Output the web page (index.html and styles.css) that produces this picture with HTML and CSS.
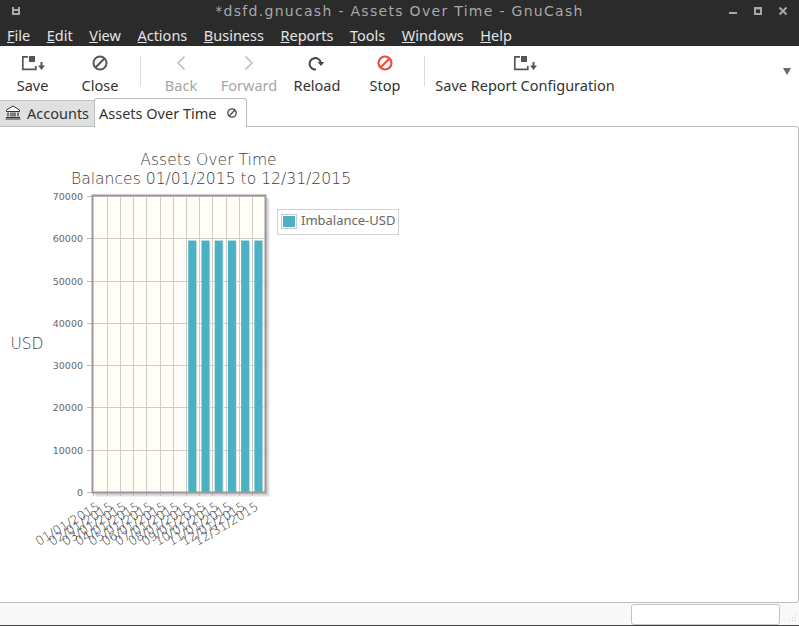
FILE: index.html
```html
<!DOCTYPE html>
<html lang="en">
<head>
  <meta charset="UTF-8">
  <title>Assets Over Time - GnuCash</title>
  <link rel="stylesheet" href="styles.css">
</head>
<body>

<div class="window">
  <div class="titlebar">
    <div class="title-left">
      <svg width="10" height="10" viewBox="0 0 10 10"><path d="M1 1h2v2h4V1h2v8H1z M3 5v2h4V5z" fill="#a8a8a8" fill-rule="evenodd"/></svg>
    </div>
    <div class="title">*dsfd.gnucash - Assets Over Time - GnuCash</div>
    <div class="win-buttons">
      <svg width="10" height="10" viewBox="0 0 10 10"><rect x="1" y="6" width="8" height="2" fill="#a8a8a8"/></svg>
      <svg width="10" height="10" viewBox="0 0 10 10"><path d="M1 1h8v8H1z M3 3.500v3.500h4V3.500z" fill="#a8a8a8" fill-rule="evenodd"/></svg>
      <svg width="10" height="10" viewBox="0 0 10 10"><path d="M1.500 1.500l7 7M8.500 1.500l-7 7" stroke="#a8a8a8" stroke-width="2"/></svg>
    </div>
  </div>

  <div class="menubar">
    <span><u>F</u>ile</span>
    <span><u>E</u>dit</span>
    <span><u>V</u>iew</span>
    <span><u>A</u>ctions</span>
    <span><u>B</u>usiness</span>
    <span><u>R</u>eports</span>
    <span><u>T</u>ools</span>
    <span><u>W</u>indows</span>
    <span><u>H</u>elp</span>
  </div>

  <div class="toolbar">
    <div class="tool tool-first">
      <svg width="24" height="18" viewBox="0 0 24 18"><path d="M7 2.800H1.800v12.500h13V12" fill="none" stroke="#555" stroke-width="1.700"/><rect x="8" y="2" width="6" height="6" fill="#555"/><path d="M19.500 8h2v3.500H24L20.500 16 17 11.500h2.500z" fill="#555"/></svg>
      <span>Save</span>
    </div>
    <div class="tool">
      <svg width="18" height="18" viewBox="0 0 18 18"><circle cx="9" cy="9" r="6.500" fill="none" stroke="#555" stroke-width="2"/><path d="M4.500 13.500l9-9" stroke="#555" stroke-width="2"/></svg>
      <span>Close</span>
    </div>
    <div class="separator"></div>
    <div class="tool disabled">
      <svg width="18" height="18" viewBox="0 0 18 18"><path d="M12.500 2.500L6 9l6.500 6.500" fill="none" stroke="#c8c8c8" stroke-width="1.800"/></svg>
      <span>Back</span>
    </div>
    <div class="tool disabled">
      <svg width="18" height="18" viewBox="0 0 18 18"><path d="M5.500 2.500L12 9l-6.500 6.500" fill="none" stroke="#c8c8c8" stroke-width="1.800"/></svg>
      <span>Forward</span>
    </div>
    <div class="tool">
      <svg width="18" height="18" viewBox="0 0 18 18"><path d="M8 15.400A5.700 5.700 0 1 1 12.800 8.500" fill="none" stroke="#444" stroke-width="2"/><path d="M9.800 8h6.400l-3.200 4z" fill="#444"/></svg>
      <span>Reload</span>
    </div>
    <div class="tool">
      <svg width="18" height="18" viewBox="0 0 18 18"><circle cx="9" cy="9" r="6.500" fill="none" stroke="#ef4a3c" stroke-width="2.200"/><path d="M4.500 13.500l9-9" stroke="#ef4a3c" stroke-width="2.200"/></svg>
      <span>Stop</span>
    </div>
    <div class="separator separator-last"></div>
    <div class="tool tool-wide">
      <svg width="24" height="18" viewBox="0 0 24 18"><path d="M7 2.800H1.800v12.500h13V12" fill="none" stroke="#555" stroke-width="1.700"/><rect x="8" y="2" width="6" height="6" fill="#555"/><path d="M19.500 8h2v3.500H24L20.500 16 17 11.500h2.500z" fill="#555"/></svg>
      <span>Save Report Configuration</span>
    </div>
    <div class="overflow"></div>
  </div>

  <div class="tabs">
    <div class="tab tab-back">
      <svg width="16" height="15" viewBox="0 0 16 15"><path d="M8 1L1.500 5v1.500h13V5z" fill="#fff" stroke="#333"/><path d="M3 7.500v4M6 7.500v4M8 7.500v4M10 7.500v4M13 7.500v4" stroke="#333" stroke-width="1.200"/><path d="M1 12.500h14M.5 14h15" stroke="#333"/></svg>
      <span>Accounts</span>
    </div>
    <div class="tab tab-active">
      <span>Assets Over Time</span>
      <svg width="12" height="12" viewBox="0 0 12 12"><circle cx="6" cy="6" r="4.200" fill="none" stroke="#444" stroke-width="1.300"/><path d="M3 9l6-6" stroke="#444" stroke-width="1.300"/></svg>
    </div>
  </div>

  <div class="report">
    <svg class="chart" width="420" height="475" viewBox="0 127 420 475">
      <text class="chart-title" x="208.500" y="165">Assets Over Time</text>
      <text class="chart-title" x="211" y="184">Balances 01/01/2015 to 12/31/2015</text>
      <text class="axis-name" x="27" y="349">USD</text>
      <g id="plot"></g>
      <rect x="277.500" y="209.500" width="121" height="25" fill="#fff" stroke="#d0d0d0"/>
      <rect x="281.500" y="214.500" width="15" height="14" fill="#fff" stroke="#ccc"/>
      <rect x="283" y="216" width="12" height="11" fill="#4bb2c5"/>
      <text class="legend-text" x="301" y="225">Imbalance-USD</text>
    </svg>
  </div>

  <div class="statusbar">
    <div class="status-box"></div>
    <svg class="grip" width="12" height="12" viewBox="0 0 12 12" fill="#ccc"><rect x="9" y="1" width="1" height="1"/><rect x="6" y="4" width="1" height="1"/><rect x="9" y="4" width="1" height="1"/><rect x="3" y="7" width="1" height="1"/><rect x="6" y="7" width="1" height="1"/><rect x="9" y="7" width="1" height="1"/></svg>
  </div>
</div>

<script src="chart.js"></script>
</body>
</html>
```

FILE: styles.css
```css
* {
  box-sizing: border-box;
}

html, body {
  margin: 0;
  height: 100%;
}

body {
  font-family: 'Noto Sans', sans-serif;
  background: #fff;
  overflow: hidden;
}

.window {
  width: 799px;
  height: 626px;
  display: flex;
  flex-direction: column;
}

.titlebar {
  height: 23px;
  background: #2b2b2b;
  color: #a8a8a8;
  display: grid;
  grid-template-columns: 1fr auto 1fr;
  align-items: center;
  padding: 0 11px 1px;
}

.title-left svg,
.win-buttons svg {
  display: block;
}

.title {
  font-family: 'DejaVu Sans', sans-serif;
  font-size: 14px;
  letter-spacing: 1.300px;
}

.win-buttons {
  display: flex;
  justify-content: flex-end;
  gap: 15px;
}

.menubar {
  height: 23px;
  background: #2b2b2b;
  color: #e4e4e4;
  font-size: 14.500px;
  display: flex;
  align-items: center;
  gap: 16.500px;
  padding: 0 7px;
}

.toolbar {
  height: 52px;
  background: #fff;
  display: flex;
  position: relative;
  color: #333;
  font-size: 14.500px;
}

.tool {
  width: 68px;
  display: flex;
  flex-direction: column;
  align-items: center;
  padding-top: 8px;
  gap: 3px;
}

.tool svg {
  display: block;
}

.tool-first {
  width: 65px;
  margin-right: 1px;
}

.tool-wide {
  width: 188px;
}

.disabled {
  color: #a6a6a6;
}

.separator {
  width: 1px;
  height: 30px;
  background: #dcdcdc;
  margin: 10px 6px 0;
}

.separator-last {
  margin-left: 5px;
}

.overflow {
  position: absolute;
  right: 8px;
  top: 22px;
  width: 0;
  height: 0;
  border-left: 4px solid transparent;
  border-right: 4px solid transparent;
  border-top: 7px solid #666;
}

.tabs {
  height: 29px;
  display: flex;
  align-items: flex-end;
  font-size: 14.500px;
  color: #333;
  margin-bottom: -1px;
  position: relative;
  z-index: 1;
}

.tab {
  display: flex;
  align-items: center;
}

.tab-back {
  height: 27px;
  width: 94px;
  background: #e0e0e0;
  border-top: 1px solid #c4c4c4;
  border-bottom: 1px solid #bdbdbd;
  padding: 0 0 2px 5px;
  gap: 6px;
}

.tab-active {
  height: 29px;
  width: 153px;
  background: #fff;
  border: 1px solid #bdbdbd;
  border-bottom: none;
  border-radius: 3px 3px 0 0;
  padding: 0 0 1px 4px;
  gap: 10px;
}

.report {
  height: 477px;
  border: 1px solid #bdbdbd;
  border-left: none;
  border-radius: 0 3px 3px 0;
  background: #fff;
}

.chart {
  display: block;
}

.chart-title {
  font-family: 'DejaVu Sans', sans-serif;
  font-weight: 200;
  font-size: 15.600px;
  fill: #3c3c3c;
  text-anchor: middle;
}

.axis-name {
  font-family: 'DejaVu Sans', sans-serif;
  font-weight: 200;
  font-size: 15.500px;
  fill: #3c3c3c;
  text-anchor: middle;
}

.tick-y {
  font-family: 'DejaVu Sans', sans-serif;
  font-size: 9.500px;
  fill: #666;
  text-anchor: end;
}

.tick-x {
  font-family: 'DejaVu Sans', sans-serif;
  font-weight: 200;
  font-size: 12.500px;
  fill: #3c3c3c;
  text-anchor: end;
}

.legend-text {
  font-family: 'Noto Sans', sans-serif;
  font-size: 13px;
  fill: #666;
}

.statusbar {
  flex: 1;
  background: #f8f8f8;
  border-bottom: 1px solid #444;
  display: flex;
  justify-content: flex-end;
  align-items: flex-end;
}

.status-box {
  width: 149px;
  height: 21px;
  background: #fff;
  border: 1px solid #c4c4c4;
  border-radius: 3px;
  margin-right: 6px;
  align-self: center;
}

.grip {
  margin-right: 1px;
}
```

FILE: chart.js
```js
// draws the jqplot style chart into the #plot group
var NS = 'http://www.w3.org/2000/svg';
var plot = document.getElementById('plot');

var left = 93, right = 265, top0 = 196, bottom = 492;
var labels = ['01/01/2015', '02/01/2015', '03/01/2015', '04/01/2015', '05/01/2015', '06/01/2015', '07/01/2015',
  '08/01/2015', '09/01/2015', '10/01/2015', '11/01/2015', '12/01/2015', '12/31/2015'];
var values = [0, 0, 0, 0, 0, 0, 0, 59700, 59700, 59700, 59700, 59700, 59700];
var max = 70000;
var step = (right - left) / labels.length;

function add(tag, attrs, text) {
  var el = document.createElementNS(NS, tag);
  for (var k in attrs) el.setAttribute(k, attrs[k]);
  if (text) el.textContent = text;
  plot.appendChild(el);
  return el;
}

function yPos(v) {
  return bottom - (v / max) * (bottom - top0);
}

// plot shadow and background
[5, 4, 3].forEach(function (d) {
  add('rect', { x: left + d - 2, y: top0 + d - 2, width: right - left + 2, height: bottom - top0 + 2, fill: 'rgba(0,0,0,0.06)' });
});
add('rect', { x: left, y: top0, width: right - left, height: bottom - top0, fill: '#fffdf6' });

// horizontal grid and y ticks
for (var v = 0; v <= max; v += 10000) {
  var y = Math.round(yPos(v)) + 0.5;
  add('line', { x1: left, x2: right, y1: y, y2: y, stroke: '#cccccc' });
  add('line', { x1: left - 6, x2: left, y1: y, y2: y, stroke: '#bbbbbb' });
  add('text', { x: left - 10, y: y + 3, 'class': 'tick-y' }, String(v));
}

// vertical grid, x ticks sit on the grid lines
labels.forEach(function (label, i) {
  var x = Math.round(left + step * i + 0.4) + 0.5;
  if (i > 0) add('line', { x1: x, x2: x, y1: top0, y2: bottom, stroke: '#cccccc' });
  add('line', { x1: x, x2: x, y1: bottom, y2: bottom + 4, stroke: '#bbbbbb' });
});

// bars
values.forEach(function (val, i) {
  if (!val) return;
  var cx = left + step * (i + 0.5);
  var y = yPos(val) + 1;
  add('rect', { x: cx - 3, y: y + 1, width: 8, height: bottom - y - 1, fill: '#e2e2e2' });
  add('rect', { x: cx - 4, y: y, width: 8, height: bottom - y, fill: '#4bb2c5' });
});

// plot border
add('rect', { x: left - 0.5, y: top0 - 0.5, width: right - left + 1, height: bottom - top0 + 1, fill: 'none', stroke: '#999999', 'stroke-width': 2 });

labels.forEach(function (label, i) {
  var ex = left + step * (i + 0.5) + 1;
  add('text', { x: ex, y: 509, 'class': 'tick-x', transform: 'rotate(-31 ' + ex + ' 509)' }, label);
});
```
